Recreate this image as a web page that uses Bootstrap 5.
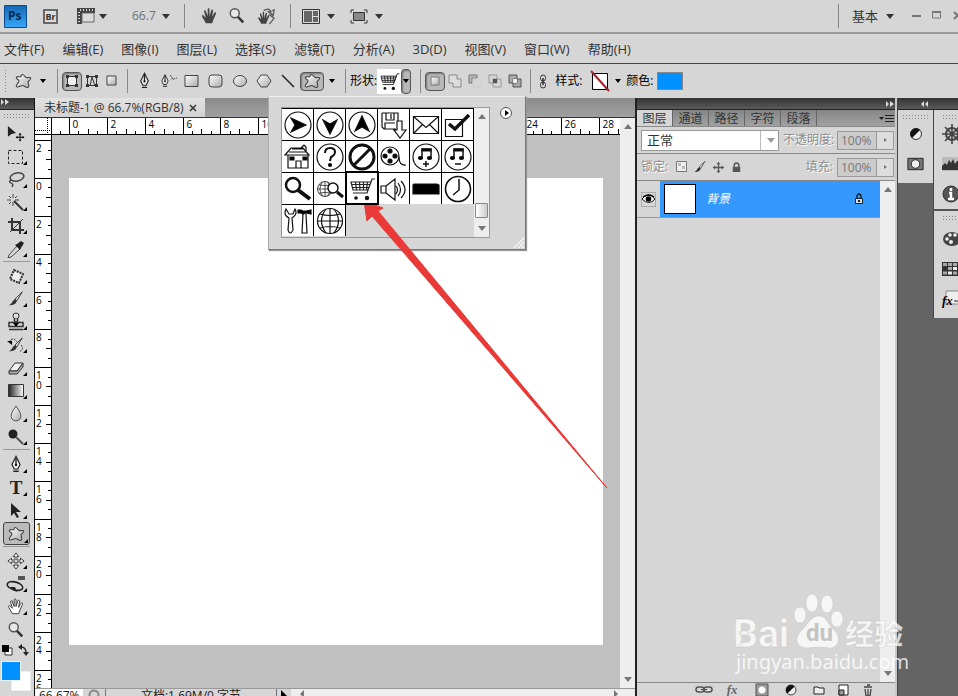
<!DOCTYPE html>
<html lang="zh-CN">
<head>
<meta charset="utf-8">
<meta name="viewport" content="width=device-width, initial-scale=1">
<title>未标题-1</title>
<link href="https://cdn.jsdelivr.net/npm/bootstrap@5.3.0/dist/css/bootstrap.min.css" rel="stylesheet">
<style>
:root{--face:#d6d6d6;--line:#8c8c8c;--dark:#646464}
body{font:12px/16px "Open Sans","Noto Sans CJK SC",sans-serif;color:#222;background:var(--face)}
.app{height:100vh}
svg{display:block;flex:none}
.plain{border:0;background:none;padding:0;display:flex;align-items:center;justify-content:center;flex:none;color:#222}
.appbar{height:34px;border-bottom:2px solid #999}
.wsname{font-size:13px;color:#333}
.menubar{height:30px;border-bottom:1px solid #444;padding-left:4px;gap:18px;font-size:13px}
.menubar a{color:#333;text-decoration:none;white-space:nowrap}
.optbar{height:34px}
.vsep{width:10px;flex:none;display:flex;justify-content:center}
.vsep::before{content:"";width:1px;height:24px;background:#888}
.grip{height:5px;background:radial-gradient(#888 1px,transparent 1px) 0 0/3px 3px}
.grip.tall{width:4px;height:24px}
.s10{width:10px}.s16{width:16px}.s20{width:20px}.s24{width:24px}.s30{width:30px}
.caret{width:0;height:0;border:4px solid transparent;border-top:5px solid #333;border-bottom:0}
.caret.tiny{border-width:3px;border-top-width:4px;border-bottom:0;border-top-color:#000}
.on{background:#b9b9b9;border:1px solid #555;border-radius:4px;box-shadow:inset 1px 1px 2px #777;height:19px}
.on.drop{height:25px}
.lbl{flex:none;white-space:nowrap;color:#000}
.colorbox{width:26px;height:18px;background:#0090ff;border:1px solid #888}
.tools{width:35px;flex:none;border-right:1px solid #111;background:var(--face)}
.tools .grip{margin:3px 4px 4px 3px}
.darkhead{height:12px;flex:none;background:linear-gradient(#333,#5a5a5a);border-bottom:1px solid #222}
.tool{height:23px;width:32px;position:relative}
.tool.more::after{content:"";position:absolute;right:5px;bottom:3px;border:2px solid transparent;border-right-color:#000;border-bottom-color:#000}
.tool.picked{width:27px;margin-left:3px;background:#bbb;border:1px solid #444;border-radius:3px}
.tool.picked::after{right:1px;bottom:1px}
.typeglyph{font:700 19px/20px "Liberation Serif",serif}
.rule{height:1px;background:#999;margin:1px 4px 2px 3px}
.rule.wide{margin-bottom:3px}
.swatches{height:52px;position:relative}
.fg,.bgc{position:absolute;width:20px;height:20px;border:1px solid #e8f4ff}
.fg{left:1px;top:20px;background:#0090ff;z-index:1}
.bgc{left:11px;top:30px;background:#fff;border-color:#eee}
.tabstrip{height:20px;background:linear-gradient(#8a8a8a,#a0a0a0);border-bottom:1px solid #333}
.doctab{width:170px;background:linear-gradient(#e2e2e2,#d2d2d2);padding-left:9px;color:#333;gap:5px}
.rulerrow{height:17px}
.rulercorner{width:17px;border-right:1px solid #000;border-bottom:1px solid #000;background:#fff}
.hruler{border-bottom:1px solid #000;background:#fff}
.vruler{width:17px;border-right:1px solid #000;background:#fff}
.ruler text{font:10px "Open Sans",sans-serif;fill:#000}
.pasteboard{background:#c0c0c0;padding:43px 17px}
.paper{background:#fff}
.track{width:15px;flex:none;background:#eee;padding:6px 0}
.up,.down{width:0;height:0;border:4px solid transparent}
.up{border-top:0;border-bottom:5px solid #777}
.down{border-bottom:0;border-top:5px solid #777}
.statusbar{height:8px;line-height:14px;border-top:1px solid #999;overflow:hidden}
.st-zoom{width:48px}.st-ico{width:22px}.st-doc{width:172px}.st-scroll{background:#eee}
.layers{width:262px;flex:none;border-left:2px solid #222;border-right:2px solid #c8c8c8;background:var(--face)}
.ptabs{height:17px;background:linear-gradient(#858585,#a2a2a2);border-bottom:1px solid #888}
.ptabs button{width:36px;padding-top:2px;border-right:1px solid #666;color:#333}
.ptabs .cur{background:var(--face)}
.prow{height:27px;border-bottom:1px solid #888;padding:0 1px 0 4px}
.emb{color:#8d8d8d;text-shadow:1px 1px #fff;white-space:nowrap}
.blend{width:138px;height:21px;border:1px solid #999;background:#fff;color:#333;font-size:13px;line-height:17px;padding:0 0 0 5px;appearance:none;border-radius:0}
.blendwrap{position:relative}
.blendwrap .caret{position:absolute;right:4px;top:8px;border-top-color:#999}
.blendwrap::after{content:"";position:absolute;right:18px;top:1px;height:19px;border-right:1px solid #bbb}
.pct{width:40px;height:19px;border:1px solid #999;background:#ccc;color:#777;padding:0 0 0 3px;border-radius:0}
.pctbtn{width:17px;height:19px;border:1px solid #999;border-left:0;background:#ddd}
.pctbtn::before{content:"";border:2px solid transparent;border-left:3px solid #777;border-right:0}
.layer{height:37px;border-bottom:1px solid #999}
.eye{width:23px}
.eye span{width:15px;height:15px;border:1px solid #aaa;display:flex;align-items:center;justify-content:center}
.layerbody{background:#3498fd;color:#fff;font-style:italic}
.thumb{width:32px;height:30px;background:#fff;border:1px solid #000;margin:0 10px 0 4px}
.pfoot{height:14px;border-top:1px solid #888;overflow:hidden;padding:0 22px 0 58px}
.dock1{width:36px;background:var(--dark);flex:none;border-left:1px solid #444}
.dock2{width:25px;background:var(--dark);flex:none}
.dockbox{background:var(--face)}
.dock2 .dockbox{border-left:1px solid #444}
.dockbox.cut{border-bottom:2px solid #555}
.dockbox .plain{height:30px}
.popup{position:absolute;left:268px;top:96px;width:258px;height:154px;background:var(--face);border:1px solid #777;border-top-color:#eee;border-left-color:#aaa;padding:10px 0 0 12px;box-shadow:1px 1px 1px #999}
.picker{border:1px solid #999;height:131px}
.shapes{display:grid;grid-template-columns:repeat(6,32px);grid-auto-rows:32px}
.shapes button{background:#fff;border:solid #000;border-width:1px 1px 0 0}
.shapes .sel{outline:2px solid #000;outline-offset:-1px;z-index:1}
.shapes svg{width:30px;height:30px;fill:none;stroke:#111;stroke-width:1.2}
.sthumb{width:13px;height:15px;border:1px solid #888;background:linear-gradient(90deg,#fff,#ccc);border-radius:1px}
.pmenu{margin-left:10px;height:12px;width:12px;border:1px solid #555;border-radius:50%;background:#fff}
.pmenu::before{content:"";border:3px solid transparent;border-left:4px solid #000;border-right:0;margin-left:1px}
.overlay{position:absolute;left:0;top:0;pointer-events:none}
</style>
<script src="https://cdn.jsdelivr.net/npm/bootstrap@5.3.0/dist/js/bootstrap.bundle.min.js"></script>
</head>
<body class="overflow-hidden">
<svg class="position-absolute" width="0" height="0" aria-hidden="true">
<defs>
<linearGradient id="g" x1="0" y1="0" x2="1" y2="1"><stop offset="0" stop-color="#fff"/><stop offset="1" stop-color="#aaa"/></linearGradient>
<linearGradient id="gb" x1="0" x2="1"><stop offset="0" stop-color="#222"/><stop offset="1" stop-color="#fff"/></linearGradient>
<linearGradient id="ps" x1="0" y1="0" x2="0" y2="1"><stop offset="0" stop-color="#1568b4"/><stop offset="1" stop-color="#37a8f8"/></linearGradient>
</defs>
<symbol id="star" viewBox="0 0 20 20"><path d="M8 3c2-1 3 2 5 3s5-1 5 1-3 3-3 4 2 5 0 6-4-2-6-2-6 3-7 1 3-4 3-6-4-2-3-4 4 0 5-1 0-2 1-2z" fill="url(#g)" stroke="#444" stroke-width="1.200"/></symbol>
<symbol id="hand" viewBox="0 0 20 20"><path d="M6 18 2 11c-1-2 1-3 2-1l2 2L4 5c0-2 2-2 2 0l2 5V3c0-2 2-2 2 0v7l2-6c0-2 2-1 2 0l-1 7 2-4c1-2 3-1 2 1l-3 7-1 3z"/></symbol>
<symbol id="lens" viewBox="0 0 20 20"><circle cx="7.500" cy="7" r="5" fill="#e8e8e8" stroke="#555" stroke-width="1.600"/><path d="m11 11 6 6" stroke="#333" stroke-width="2.800"/></symbol>
<symbol id="pen" viewBox="0 0 20 20"><path d="M10 1 5.500 10 8 15h4l2.500-5z" fill="#eee" stroke="#222" stroke-width="1.300"/><path d="M10 2v8M7 17.500h6" stroke="#222" stroke-width="1.500"/><circle cx="10" cy="10.500" r="1.300" fill="#111"/></symbol>
<symbol id="brush" viewBox="0 0 20 20"><path d="M17 2 9 10l2 2z" fill="#ddd" stroke="#333"/><path d="m9 10 2 2c-1 4-4 5-9 5 3-1 4-5 7-7z" fill="#333"/></symbol>
<symbol id="fx" viewBox="0 0 20 20"><text x="1" y="15" font-family="Liberation Serif,serif" font-size="16" font-style="italic" font-weight="700" fill="currentColor">fx</text></symbol>
<symbol id="half" viewBox="0 0 20 20"><circle cx="10" cy="10" r="5.500" fill="#eee" stroke="#333"/><path d="M6 14a5.500 5.500 0 0 1 8-8z" fill="#111"/></symbol>
<symbol id="mask" viewBox="0 0 20 20"><path d="M2 4h16v12H2z" fill="#777" stroke="#222"/><circle cx="10" cy="10" r="4.500" fill="#eee" stroke="#222"/></symbol>
<symbol id="lock" viewBox="0 0 20 20"><path d="M7 9V7c0-4 6-4 6 0v2" fill="none" stroke="currentColor" stroke-width="2"/><path d="M5 9h10v7H5z" fill="currentColor"/></symbol>
<symbol id="arr4" viewBox="0 0 20 20"><path d="m10 1 3 4h-2v4h4V7l4 3-4 3v-2h-4v4h2l-3 4-3-4h2v-4H5v2l-4-3 4-3v2h4V5H7z"/></symbol>
<symbol id="cart" viewBox="0 0 30 30"><path d="M28 5h-3l-5 14H6M4 8h20L21 16H6zM4.500 10.500h18.500M5 13.500h17M8.500 8l1 8M12.500 8l.5 8M16.500 8v8M20.500 8l-1 8" fill="none" stroke="#222" stroke-width="1.200"/><circle cx="9" cy="24" r="1.800" fill="#111" stroke="none"/><circle cx="20" cy="24" r="2.200" fill="#111" stroke="none"/></symbol>
<symbol id="dbl" viewBox="0 0 10 8"><path d="m1 1 3 3-3 3zM5 1l4 3-4 3z" fill="#ddd"/></symbol>
<symbol id="globe" viewBox="0 0 30 30"><circle cx="15" cy="15" r="12.500"/><path d="M15 2v26M2 15h26M5 8q10 3 20 0M5 22q10-3 20 0M11 3q-9 12 0 24M19 3q9 12 0 24"/></symbol>
</svg>

<div class="app d-flex flex-column overflow-hidden">
<header class="appbar d-flex align-items-center flex-shrink-0">
  <svg class="ms-1" width="23" height="23" viewBox="0 0 23 23" aria-label="Ps"><path d="M.5.5h22v22H.5z" fill="url(#ps)" stroke="#0a4d94"/><text x="4" y="15" font-family="Open Sans,sans-serif" font-size="12" font-weight="700" fill="#022b55">Ps</text></svg>
  <button class="plain ms-3" aria-label="Br"><svg width="15" height="15"><path d="M1 1h13v13H1z" fill="#ddd" stroke="#444" stroke-width="1.500"/><text x="2.500" y="11" font-family="Open Sans,sans-serif" font-size="9" font-weight="700" fill="#333">Br</text></svg></button>
  <button class="plain s24 ms-3" aria-label="查看额外内容"><svg width="19" height="16"><path d="M0 0h18v5H5v11H0z" fill="#444"/><path d="M5 5h12v9H5z" fill="#ddd" stroke="#666"/><path d="M3 2h14M2 4v11" stroke="#ddd" stroke-dasharray="1 2" stroke-width="2"/></svg></button>
  <button class="plain s10" aria-label="菜单"><i class="caret"></i></button>
  <span class="lbl ms-4 text-secondary">66.7</span>
  <button class="plain s20" aria-label="缩放级别"><i class="caret"></i></button>
  <span class="vsep mx-1"></span>
  <button class="plain s24 ms-1" aria-label="抓手"><svg width="19" height="18" fill="#444"><use href="#hand"/></svg></button>
  <button class="plain s30" aria-label="缩放"><svg width="18" height="18"><use href="#lens"/></svg></button>
  <button class="plain s30" aria-label="旋转视图"><svg width="19" height="19" viewBox="0 0 20 20"><g transform="translate(0 4) scale(.75)" fill="#444"><use href="#hand" width="20" height="20"/></g><path d="M7 4q5-4 8 1l-3 0 5 4 1-6-2 1M13 8l5 4-5 6" fill="none" stroke="#555" stroke-width="1.300"/></svg></button>
  <span class="vsep ms-1"></span>
  <button class="plain s30" aria-label="排列文档"><svg width="18" height="15"><path d="M.5.5h17v14H.5z" fill="#ddd" stroke="#333"/><path d="M2 2h8v11H2zM11 2h5v5h-5zM11 8h5v5h-5z" fill="#666"/></svg></button>
  <button class="plain s10" aria-label="菜单"><i class="caret"></i></button>
  <button class="plain s30 ms-2" aria-label="屏幕模式"><svg width="18" height="15"><path d="M1 4V1h3M14 1h3v3M17 11v3h-3M4 14H1v-3" fill="none" stroke="#333"/><path d="M3.500 3.500h11v8h-11z" fill="#888" stroke="#333"/></svg></button>
  <button class="plain s10" aria-label="菜单"><i class="caret"></i></button>
  <span class="vsep ms-auto"></span>
  <button class="plain wsname ms-2">基本</button>
  <button class="plain s24" aria-label="工作区"><i class="caret"></i></button>
  <button class="plain s30" aria-label="最小化"><svg width="10" height="10"><path d="M0 5h9" stroke="#777" stroke-width="2"/></svg></button>
  <button class="plain s10" aria-label="最大化"><svg width="10" height="10"><path d="M.5 1h8v6h-8z" fill="none" stroke="#777"/><path d="M0 1h9" stroke="#777" stroke-width="2"/></svg></button>
  <button class="plain s16 overflow-hidden" aria-label="关闭"><svg class="ms-3" width="10" height="10"><path d="m1 1 7 7M8 1 1 8" stroke="#777" stroke-width="2"/></svg></button>
</header>

<nav class="menubar d-flex align-items-center flex-shrink-0">
<a href="#">文件(F)</a><a href="#">编辑(E)</a><a href="#">图像(I)</a><a href="#">图层(L)</a><a href="#">选择(S)</a><a href="#">滤镜(T)</a><a href="#">分析(A)</a><a href="#">3D(D)</a><a href="#">视图(V)</a><a href="#">窗口(W)</a><a href="#">帮助(H)</a>
</nav>

<div class="optbar d-flex align-items-center flex-shrink-0">
  <span class="grip tall ms-1"></span>
  <button class="plain s30" aria-label="自定形状工具"><svg width="19" height="18"><use href="#star"/></svg></button>
  <button class="plain s10" aria-label="工具预设"><i class="caret tiny"></i></button>
  <span class="vsep ms-1"></span>
  <button class="plain s20 on" aria-label="形状图层"><svg width="14" height="14"><path d="M2.500 2.500h9v9h-9z" fill="#eee" stroke="#333"/><path d="M1 1h3v3H1zM10 1h3v3h-3zM1 10h3v3H1zM10 10h3v3h-3z" fill="#333"/></svg></button>
  <button class="plain s20" aria-label="路径"><svg width="14" height="14"><path d="M2.500 2.500h9v9h-9zM5 12l2-9 3 9" fill="none" stroke="#333"/><path d="M1 1h3v3H1zM10 1h3v3h-3zM1 10h3v3H1zM10 10h3v3h-3z" fill="#333"/></svg></button>
  <button class="plain s20" aria-label="填充像素"><svg width="12" height="12"><path d="M1 1h9v9H1z" fill="url(#g)" stroke="#444"/></svg></button>
  <span class="vsep"></span>
  <button class="plain s24" aria-label="钢笔"><svg width="17" height="18"><use href="#pen"/></svg></button>
  <button class="plain s24" aria-label="自由钢笔"><svg width="20" height="18"><use href="#pen" width="14" height="18"/><path d="M12 3q3 3 2 4t5-1" fill="none" stroke="#333" stroke-dasharray="2 1"/></svg></button>
  <button class="plain s24" aria-label="矩形"><svg width="16" height="14"><path d="M1 1.500h13v11H1z" fill="url(#g)" stroke="#444"/></svg></button>
  <button class="plain s24" aria-label="圆角矩形"><svg width="16" height="14"><rect x="1" y="1" width="13" height="12" rx="3" fill="url(#g)" stroke="#444"/></svg></button>
  <button class="plain s24" aria-label="椭圆"><svg width="16" height="14"><ellipse cx="8" cy="7" rx="6.500" ry="5.500" fill="url(#g)" stroke="#444"/></svg></button>
  <button class="plain s24" aria-label="多边形"><svg width="16" height="14"><path d="m1 7 4-6h6l4 6-4 6H5z" fill="url(#g)" stroke="#444"/></svg></button>
  <button class="plain s24" aria-label="直线"><svg width="14" height="14"><path d="m1 1 12 12" stroke="#222" stroke-width="1.500"/></svg></button>
  <button class="plain s24 on" aria-label="自定形状"><svg width="19" height="18"><use href="#star"/></svg></button>
  <button class="plain s16" aria-label="几何选项"><i class="caret tiny"></i></button>
  <span class="vsep"></span>
  <span class="lbl">形状:</span>
  <button class="plain bg-white s24" aria-label="购物车形状"><svg width="23" height="25"><use href="#cart"/></svg></button>
  <button class="plain s10 on drop me-1" aria-label="打开形状"><i class="caret tiny"></i></button>
  <span class="vsep"></span>
  <button class="plain s20 on" aria-label="新建形状图层"><svg width="12" height="12"><path d="M2 2h8v8H2z" fill="url(#g)" stroke="#777"/></svg></button>
  <button class="plain s20" aria-label="添加"><svg width="14" height="14"><path d="M1 1h8v4h4v8H5V9H1z" fill="#ddd" stroke="#888"/></svg></button>
  <button class="plain s20" aria-label="减去"><svg width="14" height="14"><path d="M1 1h8v3H4v5H1z" fill="#bbb" stroke="#777"/><path d="M5 5h8v8H5z" fill="none" stroke="#ccc"/></svg></button>
  <button class="plain s20" aria-label="交叉"><svg width="14" height="14"><path d="M1 1h8v8H1zM5 5h8v8H5z" fill="none" stroke="#999"/><path d="M5 5h4v4H5z" fill="#555"/></svg></button>
  <button class="plain s20" aria-label="重叠"><svg width="14" height="14"><path d="M1 1h8v8H1zM5 5h8v8H5z" fill="#aaa" stroke="#555"/><path d="M5 5h4v4H5z" fill="#eee"/></svg></button>
  <span class="vsep"></span>
  <button class="plain s16 me-1" aria-label="链接"><svg width="8" height="15"><rect x="1.500" y="1" width="5" height="6" rx="2.500" fill="none" stroke="#333"/><rect x="1.500" y="8" width="5" height="6" rx="2.500" fill="none" stroke="#333"/><path d="M4 4v7" stroke="#333" stroke-width="1.500"/></svg></button>
  <span class="lbl me-2">样式:</span>
  <button class="plain s20" aria-label="样式"><svg width="20" height="22"><path d="M2.500 3.500h15v16h-15z" fill="#fff" stroke="#000"/><path d="m1 1 18 20" stroke="#a3202c" stroke-width="2"/></svg></button>
  <button class="plain s16" aria-label="样式菜单"><i class="caret tiny"></i></button>
  <span class="lbl me-1">颜色:</span>
  <button class="plain colorbox" aria-label="颜色"></button>
</div>

<main class="d-flex flex-grow-1 overflow-hidden">
  <aside class="tools">
    <div class="darkhead"><svg width="10" height="8"><use href="#dbl"/></svg></div>
    <div class="grip"></div>
    <button class="plain tool" aria-label="移动"><svg width="18" height="18" viewBox="0 0 20 20"><path d="M1 1v12l4-3 5-1z" fill="#222"/><g transform="translate(9 8) scale(.55)"><use href="#arr4" width="20" height="20"/></g></svg></button>
    <button class="plain tool more" aria-label="选框"><svg width="18" height="18"><path d="M1.500 2.500h14v13h-14z" fill="none" stroke="#222" stroke-dasharray="3 2"/></svg></button>
    <button class="plain tool more" aria-label="套索"><svg width="18" height="18" viewBox="0 0 18 18"><ellipse cx="10" cy="6" rx="7" ry="4" fill="none" stroke="#444" stroke-width="1.500" transform="rotate(-12 10 6)"/><path d="M4 9q-3 2 0 3t1 4" fill="none" stroke="#333" stroke-width="1.300"/></svg></button>
    <button class="plain tool more" aria-label="魔棒"><svg width="18" height="18"><path d="m7 7 9 9" stroke="#333" stroke-width="2"/><path d="M6 0v4M6 8v4M0 6h4M8 6h4M2 2l2 2M10 2 8 4M2 10l2-2" stroke="#444"/></svg></button>
    <button class="plain tool more" aria-label="裁剪"><svg width="18" height="18"><path d="M5 1v12h12M1 5h12v12" fill="none" stroke="#333" stroke-width="2"/><path d="M3 15 16 2" stroke="#333"/></svg></button>
    <button class="plain tool more" aria-label="吸管"><svg width="18" height="18"><path d="m10 6 3 3-9 8-3 1 1-3z" fill="#ddd" stroke="#444"/><path d="m8 5 5 5 1-2 3-5-3-2-4 3z" fill="#222"/></svg></button>
    <div class="rule"></div>
    <button class="plain tool more" aria-label="修补"><svg width="18" height="18"><path d="m7 3 9 4-4 9-9-4z" fill="#eee" stroke="#333" stroke-width="2" stroke-dasharray="2 1"/></svg></button>
    <button class="plain tool more" aria-label="画笔"><svg width="18" height="18"><use href="#brush"/></svg></button>
    <button class="plain tool more" aria-label="图章"><svg width="18" height="19"><circle cx="9" cy="4" r="3" fill="#ddd" stroke="#333"/><path d="M7.500 7v3h3V7M2 10.500h14v4H2zM2 17.500h14" fill="#ddd" stroke="#333" stroke-width="1.500"/><path d="M6 11h6l-3 4z"/></svg></button>
    <button class="plain tool more" aria-label="历史记录画笔"><svg width="18" height="18"><use href="#brush"/><path d="M2 6q4-6 8 0M14 9q4 4-2 7" fill="none" stroke="#333" stroke-dasharray="2 1"/><path d="M0 5h5v4z"/></svg></button>
    <button class="plain tool more" aria-label="橡皮擦"><svg width="18" height="18"><path d="m2 12 6-8h8l-6 8z" fill="#f0f0f0" stroke="#333"/><path d="M2 12v3h8l6-7V4l-6 8z" fill="#aaa" stroke="#333"/></svg></button>
    <button class="plain tool more" aria-label="渐变"><svg width="17" height="14"><path d="M.5.500h15v12H.5z" fill="url(#gb)" stroke="#333"/></svg></button>
    <button class="plain tool more" aria-label="模糊"><svg width="16" height="18"><path d="M8 1q7 9 4 13-4 4-8 0Q1 10 8 1z" fill="url(#g)" stroke="#555"/></svg></button>
    <button class="plain tool more" aria-label="减淡"><svg width="18" height="18"><circle cx="6" cy="6" r="4.500" fill="#222"/><path d="m9 9 7 7" stroke="#555" stroke-width="2"/></svg></button>
    <div class="rule wide"></div>
    <button class="plain tool more" aria-label="钢笔"><svg width="18" height="19"><use href="#pen"/></svg></button>
    <button class="plain tool more"><span class="typeglyph">T</span></button>
    <button class="plain tool more" aria-label="路径选择"><svg width="14" height="16"><path d="M2 0v13l3-3 3 5 2-1-3-5h5z" fill="#222"/></svg></button>
    <button class="plain tool more picked" aria-label="自定形状"><svg width="19" height="18"><use href="#star"/></svg></button>
    <div class="rule"></div>
    <button class="plain tool more" aria-label="3D 旋转"><svg width="18" height="18" fill="#eee" stroke="#333"><use href="#arr4"/></svg></button>
    <button class="plain tool more" aria-label="3D 环绕"><svg width="22" height="20"><ellipse cx="10" cy="12" rx="8" ry="4" fill="none" stroke="#222" stroke-width="1.600" transform="rotate(15 10 12)"/><path d="M4 13h6l2 5z" fill="#222"/><path d="M13 2h7v4h-7z" fill="#555"/></svg></button>
    <button class="plain tool more" aria-label="抓手"><svg width="18" height="19" fill="#fff" stroke="#333"><use href="#hand"/></svg></button>
    <button class="plain tool" aria-label="缩放"><svg width="18" height="18"><use href="#lens"/></svg></button>
    <div class="swatches"><svg width="34" height="18"><path d="M5 7h7v7H5z" fill="#fff" stroke="#333"/><path d="M2 4h7v7H2z"/><path d="M21 6q5 0 5 6" fill="none" stroke="#222" stroke-width="1.300"/><path d="m18 6 4-3v6zM23 11h6l-3 4z" fill="#222"/></svg><button class="plain fg" aria-label="前景色"></button><button class="plain bgc" aria-label="背景色"></button></div>
  </aside>

  <section class="flex-grow-1 d-flex flex-column overflow-hidden">
    <div class="tabstrip d-flex flex-shrink-0"><div class="doctab d-flex align-items-center text-nowrap"><span>未标题-1 @ 66.7%(RGB/8)</span><button class="plain" aria-label="关闭"><svg width="8" height="8"><path d="m1 1 6 6M7 1 1 7" stroke="#333" stroke-width="1.500"/></svg></button></div></div>
    <div class="d-flex flex-grow-1 overflow-hidden">
      <div class="flex-grow-1 d-flex flex-column overflow-hidden">
        <div class="rulerrow d-flex flex-shrink-0"><svg class="rulercorner" height="17"><path d="M12.500 0v17M0 12.500h17" stroke="#000" stroke-dasharray="1 1"/></svg><svg class="hruler ruler flex-grow-1" id="hr" height="17"></svg></div>
        <div class="d-flex flex-grow-1 overflow-hidden">
          <svg class="vruler ruler" id="vr" height="100%"></svg>
          <div class="pasteboard flex-grow-1 d-flex"><div class="paper flex-grow-1"></div></div>
        </div>
      </div>
      <div class="track d-flex flex-column align-items-center justify-content-between"><i class="up"></i><i class="down"></i></div>
    </div>
    <div class="statusbar d-flex flex-shrink-0 text-nowrap">
      <span class="st-zoom bg-white px-1">66.67%</span>
      <span class="st-ico d-flex justify-content-center"><svg width="12" height="12"><circle cx="6" cy="6" r="4.500" fill="none" stroke="#888" stroke-width="2"/></svg></span>
      <span class="st-doc text-center border-start border-end border-secondary">文档:1.69M/0 字节</span>
      <svg width="14" height="14"><path d="m4 1 6 6-6 6z"/></svg>
      <span class="st-scroll flex-grow-1 d-flex justify-content-between px-2"><svg width="6" height="10"><path d="m5 1-4 4 4 4z" fill="#777"/></svg><svg class="me-2" width="6" height="10"><path d="m1 1 4 4-4 4z" fill="#777"/></svg></span>
    </div>
  </section>

  <aside class="layers d-flex flex-column">
    <div class="darkhead d-flex justify-content-end align-items-center"><svg width="10" height="8"><use href="#dbl"/></svg></div>
    <div class="ptabs d-flex flex-shrink-0"><button class="plain cur">图层</button><button class="plain">通道</button><button class="plain">路径</button><button class="plain">字符</button><button class="plain">段落</button><svg class="ms-auto mt-1" width="16" height="10"><path d="M0 3h5L2.500 6zM6 1h9v1H6zM6 4h9v1H6zM6 7h9v1H6z" fill="#222"/></svg></div>
    <div class="prow d-flex align-items-center flex-shrink-0">
      <div class="blendwrap"><select class="blend" aria-label="混合模式"><option>正常</option></select><i class="caret"></i></div>
      <label class="emb ms-1 me-auto" for="op">不透明度:</label><input id="op" class="pct" value="100%"><button class="plain pctbtn" aria-label="不透明度"></button>
    </div>
    <div class="prow d-flex align-items-center flex-shrink-0">
      <span class="emb me-1">锁定:</span>
      <button class="plain s20" aria-label="锁定透明像素"><svg width="12" height="12"><path d="M.5.500h10v10H.5z" fill="#eee" stroke="#777"/><path d="M2 2h3v3H2zM6 5h3v3H6z" fill="#bbb"/></svg></button>
      <button class="plain s16" aria-label="锁定图像"><svg width="14" height="14"><use href="#brush"/></svg></button>
      <button class="plain s20" aria-label="锁定位置"><svg width="13" height="13" fill="#555"><use href="#arr4"/></svg></button>
      <button class="plain s16" aria-label="锁定全部"><svg width="15" height="15" color="#555"><use href="#lock"/></svg></button>
      <label class="emb ms-auto me-1" for="fi">填充:</label><input id="fi" class="pct" value="100%"><button class="plain pctbtn" aria-label="填充"></button>
    </div>
    <div class="flex-grow-1 d-flex overflow-hidden">
      <div class="flex-grow-1"><div class="layer d-flex"><div class="eye d-flex align-items-center justify-content-center"><span><svg width="13" height="10"><path d="M0 5q6-8 13 0-6 7-13 0z" fill="#fff" stroke="#111"/><circle cx="6.500" cy="5" r="2.800"/><path d="M1 3q6-4 11 0" fill="none" stroke="#000" stroke-width="1.500"/></svg></span></div>
        <div class="layerbody flex-grow-1 d-flex align-items-center"><span class="thumb"></span><span>背景</span><svg class="ms-auto me-3" width="10" height="12"><path d="M3 6V4q0-3 2-3t2 3v2" fill="none" stroke="#123" stroke-width="1.500"/><path d="M1.500 5.500h7v5h-7z" fill="#ddd" stroke="#123"/><path d="M5 7v2" stroke="#123" stroke-width="2"/></svg></div></div></div>
      <div class="track d-flex flex-column align-items-center justify-content-between"><i class="up"></i><i class="down"></i></div>
    </div>
    <div class="pfoot d-flex justify-content-between flex-shrink-0">
      <button class="plain" aria-label="链接图层"><svg width="18" height="14"><rect x="1" y="4" width="8" height="5" rx="2.500" fill="none" stroke="#555" stroke-width="1.500"/><rect x="9" y="4" width="8" height="5" rx="2.500" fill="none" stroke="#555" stroke-width="1.500"/><path d="M6 6.500h6" stroke="#555"/></svg></button>
      <button class="plain" aria-label="图层样式"><svg width="16" height="16" color="#666"><use href="#fx"/></svg></button>
      <button class="plain" aria-label="蒙版"><svg width="14" height="14"><path d="M1 1h12v12H1z" fill="#999" stroke="#555"/><circle cx="7" cy="7" r="3.500" fill="#fff"/></svg></button>
      <button class="plain" aria-label="调整图层"><svg width="18" height="18"><use href="#half"/></svg></button>
      <button class="plain" aria-label="新建组"><svg width="12" height="10"><path d="M1 2h4l1 1h5v6H1z" fill="#eee" stroke="#222"/></svg></button>
      <button class="plain" aria-label="新建图层"><svg width="12" height="14"><path d="M1 2h9v10H1z" fill="#fff" stroke="#222"/><path d="M1 7h5v5H1z" stroke="#222" fill="#999"/></svg></button>
      <button class="plain" aria-label="删除"><svg width="10" height="14"><path d="M1 4h8M4 2h3M2 6l1 7h4l1-7M5 6v7" fill="none" stroke="#444" stroke-width="1.300"/></svg></button>
    </div>
  </aside>

  <aside class="dock1">
    <div class="darkhead d-flex justify-content-end align-items-center"><svg width="14" height="8" viewBox="0 0 14 8"><path d="m5 1-3 3 3 3zM9 1 6 4l3 3z" fill="#ddd"/></svg></div>
    <div class="dockbox"><div class="pt-1 px-1"><div class="grip"></div></div>
      <div class="d-flex flex-column align-items-center pb-1"><button class="plain" aria-label="调整"><svg width="20" height="20"><use href="#half"/></svg></button><button class="plain" aria-label="蒙版面板"><svg width="19" height="20"><use href="#mask"/></svg></button></div></div>
  </aside>
  <aside class="dock2 overflow-hidden">
    <div class="darkhead"></div>
    <div class="dockbox cut ps-2"><div class="pt-1"><div class="grip"></div></div>
      <button class="plain" aria-label="导航器"><svg width="18" height="20" viewBox="0 0 18 20"><path d="M10 0v20M0 10h20M3 3l14 14M3 17 17 3" stroke="#444" stroke-width="1.600"/><circle cx="10" cy="10" r="6" fill="none" stroke="#444" stroke-width="2"/></svg></button>
      <button class="plain" aria-label="直方图"><svg width="18" height="14"><path d="M0 0h18v14H0z" fill="#bbb"/><path d="M0 13V9l3-3 2 2 2-5 2 3 2-4 2 5 2-3h3v9z" fill="#333"/></svg></button>
      <button class="plain" aria-label="信息"><svg width="18" height="18"><circle cx="9" cy="9" r="8" fill="#555" stroke="#333"/><path d="M9 3v3M7 8h2v6M6 14h6" stroke="#fff" stroke-width="2.400" fill="none"/></svg></button></div>
    <div class="dockbox ps-2 pt-1 pb-1"><div class="grip mb-1"></div>
      <button class="plain" aria-label="颜色面板"><svg width="18" height="16"><ellipse cx="10" cy="8" rx="9" ry="7" fill="#444"/><circle cx="5" cy="8" r="1.800" fill="#eee"/><circle cx="8" cy="4" r="1.800" fill="#eee"/><circle cx="13" cy="4" r="1.800" fill="#eee"/><circle cx="9" cy="11" r="2" fill="#eee"/></svg></button>
      <button class="plain" aria-label="色板"><svg width="18" height="14"><path d="M0 0h18v14H0z" fill="#333"/><path d="M1 1h4v3H1zM6 1h4v3H6zM11 1h4v3h-4zM1 9.500h4v3H1zM6 5h4v3H6zM11 9.500h4v3h-4z" fill="#aaa"/><path d="M6 9.500h4v3H6zM11 5h4v3h-4z" fill="#eee"/></svg></button>
      <button class="plain" aria-label="样式面板"><svg width="20" height="20"><path d="M4 2h16v13H4z" fill="#eee" stroke="#888"/><text x="0" y="16" font-family="Liberation Serif,serif" font-size="13" font-style="italic" font-weight="700">fx</text><path d="M12 12h8" stroke="#222"/></svg></button></div>
  </aside>
</main>
</div>

<div class="popup d-flex" role="dialog" aria-label="形状">
  <div class="picker d-flex"><div class="shapes">
    <button class="plain" aria-label="向右"><svg><circle cx="15" cy="15" r="13"/><path d="m8 8 15 7-15 7 4-7z" fill="#000"/></svg></button>
    <button class="plain" aria-label="向下"><svg><circle cx="15" cy="15" r="13"/><path d="m8 10 7 4 7-4-7 14z" fill="#000"/></svg></button>
    <button class="plain" aria-label="向上"><svg><circle cx="15" cy="15" r="13"/><path d="m8 21 7-4 7 4-7-15z" fill="#000"/></svg></button>
    <button class="plain" aria-label="保存"><svg><path d="M3 3h16v8M17 19H5l-2-2V3M7 3v7h8V3M12 4v5M6 19v-6h10M18 11h5v9h4l-6 8-6-8h3z"/></svg></button>
    <button class="plain" aria-label="邮件"><svg><path d="M2.500 6.500h25v17h-25zl12.500 11 12.500-11M2.500 23.500l9-9M27.500 23.500l-9-9"/></svg></button>
    <button class="plain" aria-label="勾选"><svg><path d="M2.500 9.500h17v17h-17z"/><path d="m6 14 6 5L26 5" stroke-width="3.500"/></svg></button>
    <button class="plain" aria-label="主页"><svg><path d="m2 13 6-7h12l6 7zM5 13v13h20V13M13 26v-7h5v7M18 6l3-3 2 2v4M6 10h17M9 7h12"/><path d="M7 15h4v3H7zM20 15h4v3h-4z" fill="#000"/></svg></button>
    <button class="plain" aria-label="问号"><svg><circle cx="15" cy="15" r="13"/><path d="M10 11q0-5 5-5t5 4q0 3-4 5l-1 4" stroke-width="2"/><circle cx="15" cy="23" r="1.500" fill="#000"/></svg></button>
    <button class="plain" aria-label="禁止"><svg><path d="M27 15a12 12 0 1 1-24 0 12 12 0 1 1 24 0M7 23 23 7" stroke-width="3"/></svg></button>
    <button class="plain" aria-label="胶片"><svg><circle cx="11" cy="14" r="9"/><g fill="#000"><circle cx="11" cy="9" r="2"/><circle cx="11" cy="19" r="2"/><circle cx="6" cy="14" r="2"/><circle cx="16" cy="14" r="2"/></g><path d="M20 15q0 9 7 8"/></svg></button>
    <button class="plain" aria-label="添加音乐"><svg><circle cx="15" cy="15" r="13"/><path d="M11 16V7h9v9" stroke-width="1.500"/><path d="M11 7h9v2h-9z" fill="#000"/><ellipse cx="9.500" cy="16" rx="2" ry="1.500" fill="#000"/><ellipse cx="18.500" cy="16" rx="2" ry="1.500" fill="#000"/><path d="M15 19v6M12 22h6" stroke-width="1.500"/></svg></button>
    <button class="plain" aria-label="移除音乐"><svg><circle cx="15" cy="15" r="13"/><path d="M11 16V7h9v9" stroke-width="1.500"/><path d="M11 7h9v2h-9z" fill="#000"/><ellipse cx="9.500" cy="16" rx="2" ry="1.500" fill="#000"/><ellipse cx="18.500" cy="16" rx="2" ry="1.500" fill="#000"/><path d="M12 22h6" stroke-width="1.500"/></svg></button>
    <button class="plain" aria-label="搜索"><svg><circle cx="10" cy="11" r="7" stroke-width="2.500"/><path d="m15 16 12 9" stroke-width="4"/></svg></button>
    <button class="plain" aria-label="网络搜索"><svg><g transform="translate(1 6) scale(.6)"><use href="#globe" width="30" height="30"/></g><circle cx="18" cy="14" r="5" fill="#fff" stroke-width="1.500"/><path d="m22 18 6 5" stroke-width="3"/></svg></button>
    <button class="plain sel position-relative" aria-label="购物车"><svg><use href="#cart"/></svg></button>
    <button class="plain" aria-label="音量"><svg><path d="M2 12h5v7H2zM7 12l9-7v21l-9-7M17 12q3 4 0 8M19 9q5 7 0 13M22 7q8 9 0 17"/></svg></button>
    <button class="plain" aria-label="标签"><svg><path d="M2 20v-9l1-1h23l2 1v9z" fill="#000"/></svg></button>
    <button class="plain" aria-label="时间"><svg><circle cx="15" cy="15" r="12.500" stroke-width="1.600"/><path d="M16 5v11l-6 5" stroke-width="1.500"/></svg></button>
    <button class="plain" aria-label="工具"><svg><path d="M3 3q-3 6 3 9L5 24q2 6 5 0L9 12q6-4 3-9l-2 5H6zM20 8l-1 19h5L23 8"/><path d="M15 4h3l2 1h3l5-1v4l-5-1-3 1-2-1h-3z" fill="#000"/></svg></button>
    <button class="plain" aria-label="全球"><svg><use href="#globe"/></svg></button>
  </div>
  <div class="track d-flex flex-column align-items-center"><i class="up"></i><i class="sthumb mt-auto mb-2"></i><i class="down"></i></div></div>
  <button class="plain pmenu" aria-label="形状菜单"></button>
  <svg class="position-absolute end-0 bottom-0" width="12" height="12"><path d="M1 11 11 1M5 11l6-6M9 11l2-2" stroke="#fff" stroke-width="1.500" stroke-dasharray="2 1"/></svg>
</div>

<svg class="overlay" width="958" height="696">
  <path d="M364 201 367 221 372 216 607 488 378 211 383 208z" fill="#e93a38" stroke="#e93a38"/>
  <g fill="#fff" fill-opacity=".78" stroke="#bbb" stroke-opacity=".35">
    <text x="733" y="647" font-family="Roboto,sans-serif" font-size="39" font-weight="700">Bai</text>
    <path d="M819 616c8 0 9 9 15 14s7 17-4 18q-11-2-22 0c-12 0-14-10-7-17s10-15 18-15z"/>
    <ellipse cx="800" cy="615" rx="6" ry="8"/><ellipse cx="812" cy="603" rx="6" ry="9"/><ellipse cx="827" cy="604" rx="6" ry="9"/><ellipse cx="837" cy="619" rx="6" ry="8"/>
    <text x="845" y="645" font-family="Noto Sans CJK SC,sans-serif" font-size="29" font-weight="700">经验</text>
    <text x="736" y="669" font-family="Noto Sans,sans-serif" font-size="20" stroke="none">jingyan.baidu.com</text>
  </g>
  <text x="806" y="641" font-family="Roboto,sans-serif" font-size="24" font-weight="700" fill="#c4c4c4">du</text>
</svg>

<script>
// Rulers: one major division spans two units, split in four.
const step = 37.84;
const line = (a, b, c, d) => `<path d="M${a} ${b}L${c} ${d}" stroke="#000"/>`;
let h = '', v = '';
for (let i = -1; i < 60; i++) {
  const x = Math.round(17 + i * step / 4) + 0.5, m = i % 4 === 0;
  h += line(x, m ? 0 : i % 2 ? 13 : 11, x, 17);
  if (m) h += `<text x="${x + 3}" y="10">${i / 2}</text>`;
}
for (let i = -4; i < 54; i++) {
  const y = Math.round(43 + i * step / 4) + 0.5, m = i % 4 === 0;
  v += line(m ? 0 : i % 2 ? 13 : 11, y, 17, y);
  if (m) [...String(Math.abs(i / 2))].forEach((d, k) => v += `<text x="1" y="${y + 11 + k * 10}">${d}</text>`);
}
document.getElementById('hr').innerHTML = h;
document.getElementById('vr').innerHTML = v;
</script>
</body>
</html>
